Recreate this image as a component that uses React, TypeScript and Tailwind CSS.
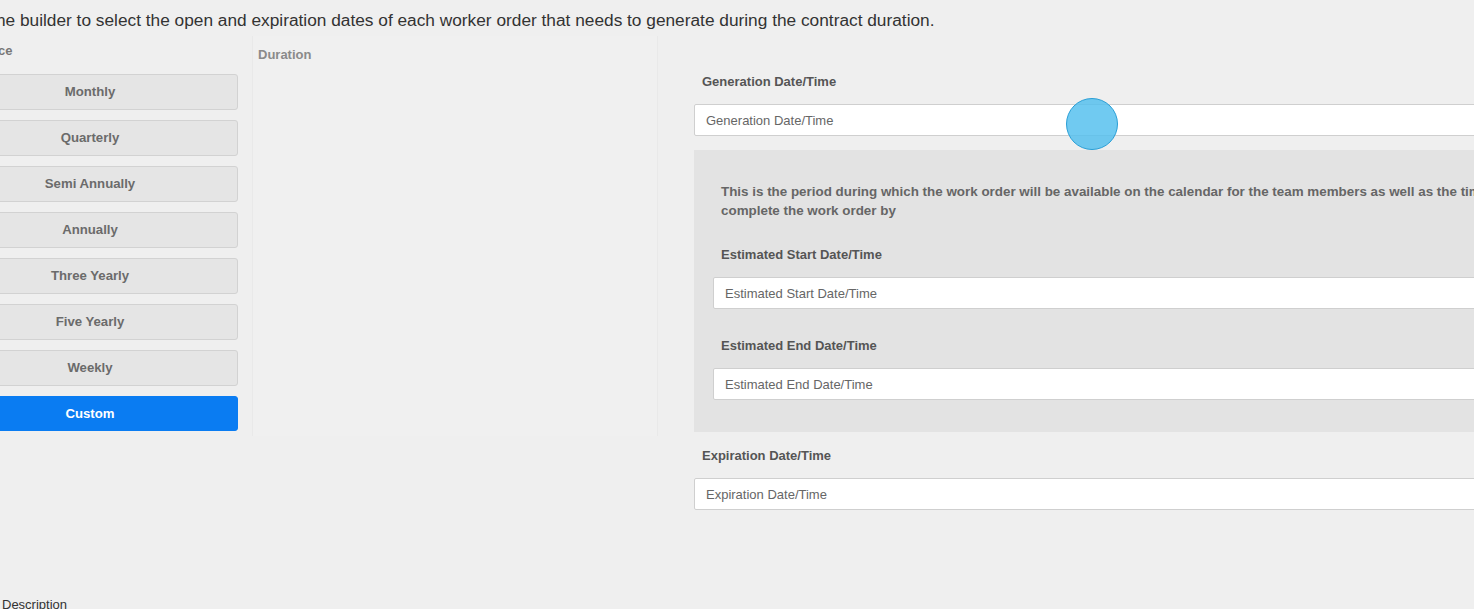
import React from 'react';

const options = ['Monthly', 'Quarterly', 'Semi Annually', 'Annually', 'Three Yearly', 'Five Yearly', 'Weekly', 'Custom'];

const DateField: React.FC<{ label: string }> = ({ label }) => (
  <div>
    <div className="pl-2 text-[13px] leading-[15px] font-bold text-[#555]">{label}</div>
    <input
      readOnly
      placeholder={label}
      className="mt-[15px] block w-full h-[32px] bg-white border border-[#cfcfcf] rounded-[2px] px-[11px] text-[13px] text-[#555] placeholder:text-[#666] outline-none"
    />
  </div>
);

export default function App() {
  const selected = 'Custom';

  return (
    <div
      className="relative w-[1474px] h-[609px] overflow-hidden bg-[#efefef]"
      style={{ fontFamily: '"Liberation Sans", Arial, sans-serif' }}
    >
      <div className="-ml-[60px] w-[1700px]">
        <p className="pt-[10px] pl-[5px] text-[17.3px] leading-[20px] text-[#333] whitespace-nowrap">
          Allow the builder to select the open and expiration dates of each worker order that needs to generate during the contract duration.
        </p>

        <div className="flex mt-[6px]">
          {/* frequency */}
          <div className="w-[312px] pl-[2px]">
            <div className="-ml-[1px] pt-[7px] text-[13px] leading-[15px] font-bold text-[#777]">Recurrence</div>
            <div className="mt-[16px] flex flex-col gap-[10px] w-[296px]">
              {options.map((o) => (
                <button
                  key={o}
                  className={
                    o === selected
                      ? 'h-[35px] rounded-[3px] bg-[#0a7cf2] border border-[#0a7cf2] text-white text-[13.2px] font-bold'
                      : 'h-[36px] rounded-[3px] bg-[#e5e5e5] border border-[#d2d2d2] text-[#6b6b6b] text-[13.2px] font-bold'
                  }
                >
                  {o}
                </button>
              ))}
            </div>
          </div>

          {/* duration */}
          <div className="w-[406px] h-[400px] border-l border-r border-[#e9e9e9] bg-[#f0f0f0] pl-[5px] pt-[11px]">
            <div className="text-[13px] leading-[15px] font-bold text-[#8a8a8a]">Duration</div>
          </div>

          {/* dates */}
          <div className="w-[940px] pl-[36px] pt-[38px]">
            <DateField label="Generation Date/Time" />

            <div className="mt-[14px] bg-[#e3e3e3] pl-[19px] pt-[32px] pb-[32px]">
              <p className="pl-2 text-[13.4px] leading-[19px] font-bold text-[#666]">
                This is the period during which the work order will be available on the calendar for the team members as well as the time they have to
                <br />
                complete the work order by
              </p>
              <div className="mt-[27px]">
                <DateField label="Estimated Start Date/Time" />
              </div>
              <div className="mt-[29px]">
                <DateField label="Estimated End Date/Time" />
              </div>
            </div>

            <div className="mt-[16px]">
              <DateField label="Expiration Date/Time" />
            </div>
          </div>
        </div>

        <div className="pl-[62px] mt-[87px] text-[13px] leading-[15px] text-[#333]">Description</div>
      </div>

      {/* click highlight */}
      <div className="absolute left-[1066px] top-[98px] w-[52px] h-[52px] rounded-full bg-[rgba(80,190,238,0.82)] border-[1.5px] border-[#2a9fd6]" />
    </div>
  );
}
